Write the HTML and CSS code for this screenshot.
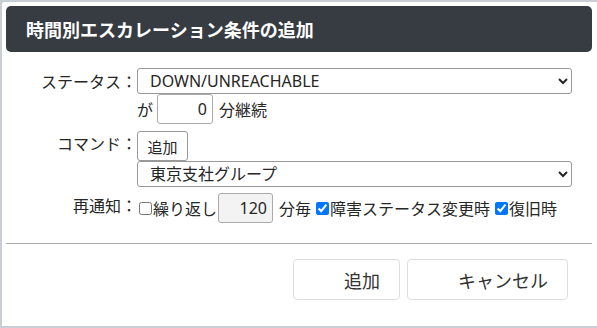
FILE: index.html
```html
<!DOCTYPE html>
<html lang="ja">
<head>
<meta charset="utf-8">
<title>時間別エスカレーション条件の追加</title>
<link rel="stylesheet" href="styles.css">
</head>
<body>
<div class="dialog">
  <div class="header">時間別エスカレーション条件の追加</div>
  <div class="form">
    <label class="lbl">ステータス：</label>
    <select class="sel"><option>DOWN/UNREACHABLE</option></select>
    <span></span>
    <div class="line">
      <span>が</span>
      <input class="num n0" type="text" value="0">
      <span class="after">分継続</span>
    </div>
    <label class="lbl lbl-cmd">コマンド：</label>
    <div class="line cmdline"><button class="small-btn">追加</button></div>
    <span></span>
    <select class="sel"><option>東京支社グループ</option></select>
    <label class="lbl lbl-re">再通知：</label>
    <div class="line reline">
      <input class="chk first" type="checkbox"><span>繰り返し</span>
      <input class="num n120" type="text" value="120">
      <span class="after">分毎</span>
      <input class="chk" type="checkbox" checked><span>障害ステータス変更時</span>
      <input class="chk" type="checkbox" checked><span>復旧時</span>
    </div>
  </div>
  <hr class="sep">
  <div class="footer">
    <button class="big-btn">追加</button>
    <button class="big-btn">キャンセル</button>
  </div>
</div>
</body>
</html>
```
FILE: styles.css
```css
html, body {
  margin: 0;
  padding: 0;
}
body {
  background: #c9ced4;
  width: 597px;
  height: 328px;
  overflow: hidden;
  font-family: "Noto Sans", "Noto Sans CJK JP", sans-serif;
  font-size: 16px;
  color: #262626;
}
.dialog {
  margin: 2px 0 0 2px;
  height: 324px;
  background: #fff;
  border-top-left-radius: 3px;
  display: flex;
  flex-direction: column;
}
.header {
  margin: 4px 5px 0 4px;
  height: 46px;
  background: #373b42;
  border-radius: 5px;
  color: #fff;
  font-family: "Noto Sans CJK JP", sans-serif;
  font-weight: 700;
  font-size: 18px;
  line-height: 46px;
  padding-left: 20px;
}
.form {
  margin-top: 16px;
  display: grid;
  grid-template-columns: 135px 435px;
}
.lbl {
  text-align: right;
  align-self: center;
  font-family: "Noto Sans CJK JP", sans-serif;
  line-height: 20px;
}
.sel {
  height: 26px;
  width: 435px;
  border: 1px solid #999;
  border-radius: 3px;
  background: #fff;
  font-family: "Noto Sans", "Noto Sans CJK JP", sans-serif;
  font-size: 16px;
  color: #262626;
  padding: 0 0 0 8px;
  margin: 0;
}
.line {
  display: flex;
  align-items: center;
  font-family: "Noto Sans CJK JP", sans-serif;
  white-space: nowrap;
}
.num {
  box-sizing: border-box;
  height: 30px;
  border: 1px solid #aaa;
  border-radius: 3px;
  text-align: right;
  font-family: "Noto Sans", sans-serif;
  font-size: 16px;
  color: #262626;
  padding: 0 5px 0 0;
  margin: 0;
}
.n0 {
  width: 56px;
  margin-left: 4px;
}
.n120 {
  width: 55px;
  margin-left: 1px;
  background: #f3f3f3;
}
.after {
  margin-left: 6px;
}
.cmdline {
  margin-top: 7px;
}
.small-btn {
  box-sizing: border-box;
  height: 30px;
  width: 51px;
  border: 1px solid #999;
  border-radius: 3px;
  background: #fff;
  font-family: "Noto Sans CJK JP", sans-serif;
  font-size: 15px;
  color: #262626;
  padding: 0;
  margin: 0;
}
.reline {
  margin-top: 6px;
}
.chk {
  width: 13px;
  height: 13px;
  margin: 0 1px 0 5px;
  accent-color: #0075ff;
}
.chk.first {
  margin-left: 2px;
}
.sep {
  margin: 20px 5px 0 4px;
  border: 0;
  border-top: 1px solid #aaa;
  height: 0;
}
.footer {
  margin-top: 15px;
  display: flex;
  justify-content: flex-end;
  gap: 7px;
  padding-right: 29px;
}
.big-btn {
  box-sizing: border-box;
  height: 41px;
  border: 1px solid #ddd;
  border-radius: 4px;
  background: #fff;
  font-family: "Noto Sans CJK JP", sans-serif;
  font-size: 18px;
  color: #333;
  padding: 0 19px 0 50px;
  margin: 0;
}
```
